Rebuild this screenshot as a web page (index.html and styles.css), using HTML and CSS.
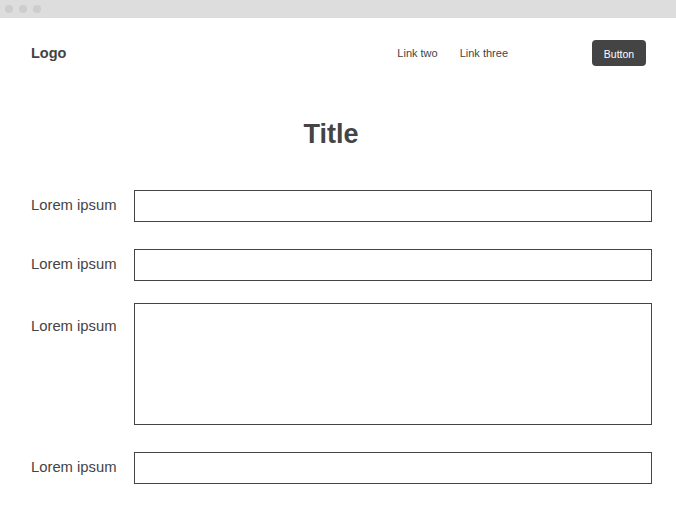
FILE: index.html
```html
<!DOCTYPE html>
<html lang="en">
<head>
<meta charset="utf-8">
<title>Form</title>
<link rel="stylesheet" href="styles.css">
</head>
<body>
<div class="topbar">
  <span class="dot"></span><span class="dot"></span><span class="dot"></span>
</div>
<header class="header">
  <div class="logo">Logo</div>
  <nav class="nav">
    <a class="nav-link" href="#">Link two</a>
    <a class="nav-link" href="#">Link three</a>
  </nav>
  <button class="btn" type="button">Button</button>
</header>
<h1 class="title">Title</h1>
<form class="form">
  <div class="row">
    <label class="label">Lorem ipsum</label>
    <input class="field" type="text">
  </div>
  <div class="row">
    <label class="label">Lorem ipsum</label>
    <input class="field" type="text">
  </div>
  <div class="row row-top">
    <label class="label label-top">Lorem ipsum</label>
    <textarea class="field area"></textarea>
  </div>
  <div class="row">
    <label class="label">Lorem ipsum</label>
    <input class="field" type="text">
  </div>
</form>
</body>
</html>
```
FILE: styles.css
```css
* { box-sizing: border-box; }
html, body { margin: 0; padding: 0; background: #fff; }
body {
  font-family: "Liberation Sans", Arial, sans-serif;
  color: #444;
  width: 676px;
  height: 515px;
  overflow: hidden;
}
.topbar {
  height: 18px;
  background: #dddddd;
  display: flex;
  align-items: center;
  gap: 6px;
  padding-left: 5px;
}
.dot {
  width: 8px;
  height: 8px;
  border-radius: 50%;
  background: #cdcdcd;
}
.header {
  display: flex;
  align-items: center;
  padding: 22px 30px 0 31px;
  height: 48px;
}
.logo {
  font-weight: bold;
  font-size: 14.5px;
}
.nav {
  margin-left: auto;
  display: flex;
  gap: 22px;
  margin-right: 84px;
}
.nav-link {
  color: #444;
  text-decoration: none;
  font-size: 11px;
}
.btn {
  width: 54px;
  height: 26px;
  background: #444;
  color: #fff;
  border: none;
  border-radius: 4px;
  font-family: "Liberation Sans", Arial, sans-serif;
  font-size: 10.5px;
  padding: 0;
  padding-top: 1px;
}
.title {
  margin: 52px 0 0;
  padding: 0 45px 0 31px;
  text-align: center;
  font-size: 27px;
  line-height: 32px;
  font-weight: bold;
}
.form {
  margin-top: 40px;
  padding: 0 24px 0 31px;
  display: flex;
  flex-direction: column;
  gap: 27px;
}
.row {
  display: flex;
  align-items: center;
}
.row-top {
  align-items: flex-start;
  margin-top: -5px;
}
.label {
  width: 103px;
  flex: none;
  font-size: 14.8px;
  line-height: 17px;
  padding-bottom: 1px;
}
.label-top {
  padding-top: 15px;
}
.field {
  flex: 1;
  height: 32px;
  border: 1px solid #444;
  border-radius: 0;
  margin: 0;
  background: #fff;
  font-family: inherit;
}
.area {
  height: 122px;
  resize: none;
}
```
